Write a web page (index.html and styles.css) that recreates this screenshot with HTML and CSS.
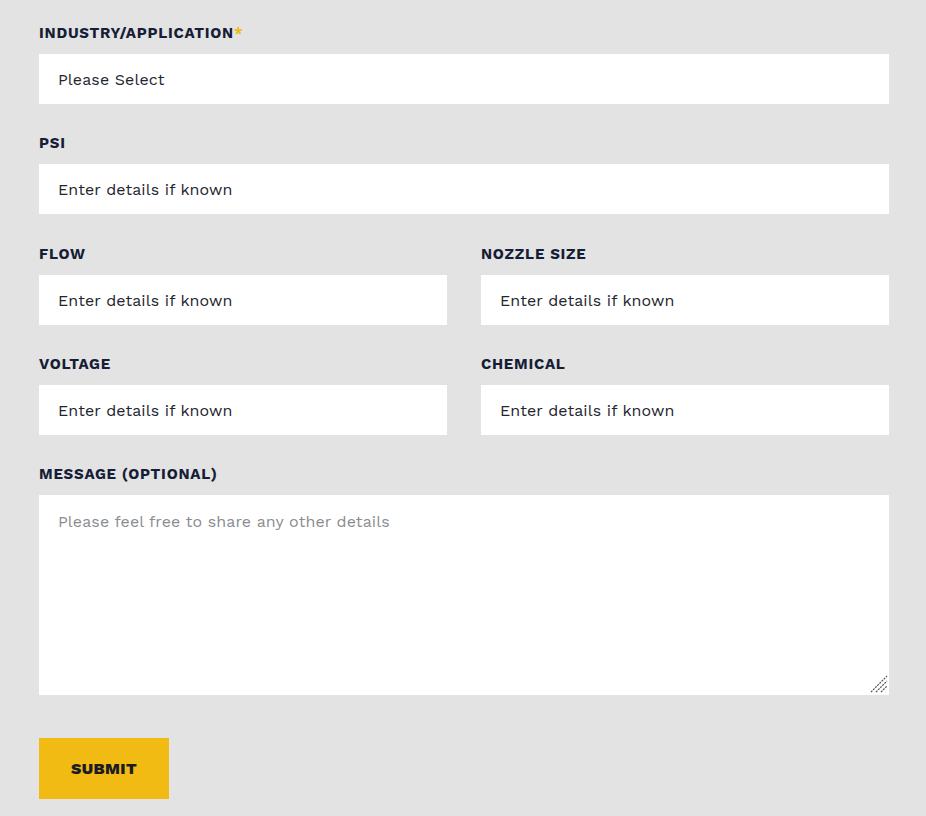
FILE: index.html
```html
<!DOCTYPE html>
<html lang="en">
<head>
  <meta charset="UTF-8"/>
  <meta name="viewport" content="width=device-width, initial-scale=1.0"/>
  <title>Request a Quote</title>
  <link rel="stylesheet" href="styles.css">
</head>
<body>
  <form class="quote-form" onsubmit="return false;">
    <div class="field">
      <label for="industry">INDUSTRY/APPLICATION<span class="req">*</span></label>
      <select id="industry">
        <option>Please Select</option>
        <option>Agriculture</option>
        <option>Car Wash</option>
        <option>Industrial Cleaning</option>
      </select>
    </div>

    <div class="field">
      <label for="psi">PSI</label>
      <input type="text" id="psi" value="Enter details if known">
    </div>

    <div class="row first-row">
      <div class="field">
        <label for="flow">FLOW</label>
        <input type="text" id="flow" value="Enter details if known">
      </div>
      <div class="field">
        <label for="nozzle">NOZZLE SIZE</label>
        <input type="text" id="nozzle" value="Enter details if known">
      </div>
    </div>

    <div class="row">
      <div class="field">
        <label for="voltage">VOLTAGE</label>
        <input type="text" id="voltage" value="Enter details if known">
      </div>
      <div class="field">
        <label for="chemical">CHEMICAL</label>
        <input type="text" id="chemical" value="Enter details if known">
      </div>
    </div>

    <div class="field field-message">
      <label for="message">MESSAGE (OPTIONAL)</label>
      <div class="textarea-wrap">
        <textarea id="message" placeholder="Please feel free to share any other details"></textarea>
        <!-- resize grip -->
        <svg class="grip" width="18" height="18" viewBox="0 0 18 18">
          <g stroke="#555" stroke-width="1.2" stroke-dasharray="2 1">
            <line x1="1" y1="17" x2="17" y2="1"/>
            <line x1="6" y1="17" x2="17" y2="6"/>
            <line x1="11" y1="17" x2="17" y2="11"/>
          </g>
        </svg>
      </div>
    </div>

    <button type="submit" class="submit-btn">SUBMIT</button>
  </form>
</body>
</html>
```

FILE: styles.css
```css
* { box-sizing: border-box; margin: 0; padding: 0; }
body {
  font-family: "Work Sans", Inter, "Open Sans", sans-serif;
  background-color: #e3e3e3;
  color: #1f2333;
}

.quote-form {
  padding: 23px 37px 17px 39px;
}

.row {
  display: grid;
  grid-template-columns: 1fr 1fr;
  gap: 34px;
}
.first-row { padding-top: 1px; }

.field {
  display: flex;
  flex-direction: column;
  margin-bottom: 29px;
}
.field label {
  font-size: 15px;
  line-height: 20px;
  font-weight: 700;
  color: #161d36;
  margin-bottom: 11px;
  letter-spacing: 0.75px;
}
.field label .req { color: #f1bb14; }

.field input,
.field select,
.field textarea {
  width: 100%;
  height: 50px;
  padding: 0 19px;
  border: none;
  border-radius: 0;
  background: #fff;
  font-family: inherit;
  font-size: 16px;
  letter-spacing: 0.1px;
  color: #23252d;
  outline: none;
  -webkit-appearance: none;
  appearance: none;
}
.textarea-wrap {
  position: relative;
  height: 200px;
}
.field textarea {
  display: block;
  height: 200px;
  padding: 17px 19px;
  resize: none;
  line-height: 20px;
}
.field textarea::placeholder { color: #8a8c90; }
.grip {
  position: absolute;
  right: 1px;
  bottom: 2px;
  pointer-events: none;
}

.field-message { margin-bottom: 43px; }

.submit-btn {
  width: 130px;
  height: 61px;
  background-color: #f1bb14;
  border: none;
  font-family: inherit;
  font-size: 16px;
  font-weight: 800;
  letter-spacing: 0.4px;
  color: #1c1c22;
  cursor: pointer;
}
```
